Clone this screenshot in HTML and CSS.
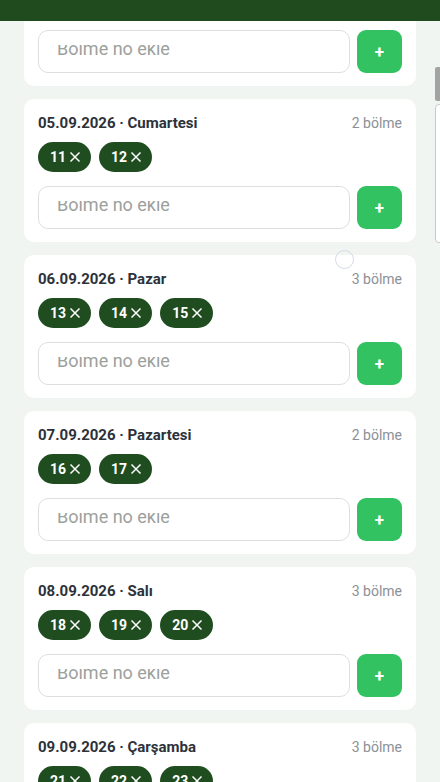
FILE: index.html
```html
<!DOCTYPE html>
<html lang="tr">
<head>
  <meta charset="UTF-8" />
  <title>Bölümler</title>
  <meta name="viewport" content="width=device-width, initial-scale=1.0" />
  <link rel="stylesheet" href="styles.css">
</head>
<body>

  <!-- Üst bar -->
  <div class="topbar"></div>

  <!-- Gün listesi -->
  <div class="list">

    <div class="day-card">
      <div class="day-head">
        <span class="day-title">04.09.2026 · Cuma</span>
        <span class="day-count">2 bölme</span>
      </div>
      <div class="chips">
        <span class="chip">9 <svg viewBox="0 0 12 12"><path d="M1.5 1.5l9 9M10.5 1.5l-9 9"/></svg></span>
        <span class="chip">10 <svg viewBox="0 0 12 12"><path d="M1.5 1.5l9 9M10.5 1.5l-9 9"/></svg></span>
      </div>
      <div class="add-row">
        <div class="field"><div class="clip"><input type="text" placeholder="Bölme no ekle"></div></div>
        <button class="add-btn">+</button>
      </div>
    </div>

    <div class="day-card">
      <div class="day-head">
        <span class="day-title">05.09.2026 · Cumartesi</span>
        <span class="day-count">2 bölme</span>
      </div>
      <div class="chips">
        <span class="chip">11 <svg viewBox="0 0 12 12"><path d="M1.5 1.5l9 9M10.5 1.5l-9 9"/></svg></span>
        <span class="chip">12 <svg viewBox="0 0 12 12"><path d="M1.5 1.5l9 9M10.5 1.5l-9 9"/></svg></span>
      </div>
      <div class="add-row">
        <div class="field"><div class="clip"><input type="text" placeholder="Bölme no ekle"></div></div>
        <button class="add-btn">+</button>
      </div>
    </div>

    <div class="day-card">
      <div class="day-head">
        <span class="day-title">06.09.2026 · Pazar</span>
        <span class="day-count">3 bölme</span>
      </div>
      <div class="chips">
        <span class="chip">13 <svg viewBox="0 0 12 12"><path d="M1.5 1.5l9 9M10.5 1.5l-9 9"/></svg></span>
        <span class="chip">14 <svg viewBox="0 0 12 12"><path d="M1.5 1.5l9 9M10.5 1.5l-9 9"/></svg></span>
        <span class="chip">15 <svg viewBox="0 0 12 12"><path d="M1.5 1.5l9 9M10.5 1.5l-9 9"/></svg></span>
      </div>
      <div class="add-row">
        <div class="field"><div class="clip"><input type="text" placeholder="Bölme no ekle"></div></div>
        <button class="add-btn">+</button>
      </div>
    </div>

    <div class="day-card">
      <div class="day-head">
        <span class="day-title">07.09.2026 · Pazartesi</span>
        <span class="day-count">2 bölme</span>
      </div>
      <div class="chips">
        <span class="chip">16 <svg viewBox="0 0 12 12"><path d="M1.5 1.5l9 9M10.5 1.5l-9 9"/></svg></span>
        <span class="chip">17 <svg viewBox="0 0 12 12"><path d="M1.5 1.5l9 9M10.5 1.5l-9 9"/></svg></span>
      </div>
      <div class="add-row">
        <div class="field"><div class="clip"><input type="text" placeholder="Bölme no ekle"></div></div>
        <button class="add-btn">+</button>
      </div>
    </div>

    <div class="day-card">
      <div class="day-head">
        <span class="day-title">08.09.2026 · Salı</span>
        <span class="day-count">3 bölme</span>
      </div>
      <div class="chips">
        <span class="chip">18 <svg viewBox="0 0 12 12"><path d="M1.5 1.5l9 9M10.5 1.5l-9 9"/></svg></span>
        <span class="chip">19 <svg viewBox="0 0 12 12"><path d="M1.5 1.5l9 9M10.5 1.5l-9 9"/></svg></span>
        <span class="chip">20 <svg viewBox="0 0 12 12"><path d="M1.5 1.5l9 9M10.5 1.5l-9 9"/></svg></span>
      </div>
      <div class="add-row">
        <div class="field"><div class="clip"><input type="text" placeholder="Bölme no ekle"></div></div>
        <button class="add-btn">+</button>
      </div>
    </div>

    <div class="day-card">
      <div class="day-head">
        <span class="day-title">09.09.2026 · Çarşamba</span>
        <span class="day-count">3 bölme</span>
      </div>
      <div class="chips">
        <span class="chip">21 <svg viewBox="0 0 12 12"><path d="M1.5 1.5l9 9M10.5 1.5l-9 9"/></svg></span>
        <span class="chip">22 <svg viewBox="0 0 12 12"><path d="M1.5 1.5l9 9M10.5 1.5l-9 9"/></svg></span>
        <span class="chip">23 <svg viewBox="0 0 12 12"><path d="M1.5 1.5l9 9M10.5 1.5l-9 9"/></svg></span>
      </div>
      <div class="add-row">
        <div class="field"><div class="clip"><input type="text" placeholder="Bölme no ekle"></div></div>
        <button class="add-btn">+</button>
      </div>
    </div>

  </div>

  <!-- Kaydırma göstergeleri -->
  <div class="scroll-thumb"></div>
  <div class="fast-scroll"></div>
  <div class="touch-dot"></div>

</body>
</html>
```

FILE: styles.css
```css
body {
  margin: 0;
  padding: 0;
  font-family: Roboto, 'Noto Sans', sans-serif;
  background: #f1f5f1;
  color: #2d323a;
  overflow: hidden;
}

/* Üst bar */
.topbar {
  position: fixed;
  top: 0;
  left: 0;
  right: 0;
  height: 21px;
  background: #1f4b1f;
  z-index: 10;
}

/* Liste (kaydırılmış konum) */
.list {
  margin-top: -57px;
  padding: 0 24px;
  display: flex;
  flex-direction: column;
  gap: 13px;
}

.day-card {
  background: #fff;
  border-radius: 10px;
  padding: 14px 14px 13px;
}

.day-head {
  display: flex;
  justify-content: space-between;
  align-items: center;
  height: 20px;
}

.day-title {
  font-size: 15px;
  font-weight: 700;
  color: #2d323a;
}

.day-count {
  font-size: 14px;
  color: #8b9096;
}

.chips {
  display: flex;
  gap: 8px;
  margin-top: 9px;
}

.chip {
  display: inline-flex;
  align-items: center;
  gap: 3px;
  height: 30px;
  padding: 0 10px 0 12px;
  border-radius: 15px;
  background: #1f4d1f;
  color: #fff;
  font-size: 14px;
  font-weight: 700;
  box-sizing: border-box;
}

.chip svg {
  width: 12px;
  height: 12px;
  fill: none;
  stroke: #fff;
  stroke-width: 1.5;
}

.add-row {
  display: flex;
  gap: 7px;
  margin-top: 14px;
}

.field {
  flex: 1;
  height: 43px;
  box-sizing: border-box;
  border: 1px solid #dcdfdc;
  border-radius: 10px;
  background: #fff;
}

.field .clip {
  margin-top: 14px;
  height: 27px;
  overflow: hidden;
}

.field input {
  display: block;
  width: 100%;
  height: 30px;
  margin-top: -12px;
  box-sizing: border-box;
  padding: 0 18px;
  border: none;
  outline: none;
  background: transparent;
  font-family: Roboto, sans-serif;
  font-size: 18px;
  color: #2d323a;
}

.field input::placeholder {
  color: #9ca19c;
}

.add-btn {
  width: 45px;
  height: 43px;
  border: none;
  border-radius: 9px;
  background: #33c261;
  color: #fff;
  font-family: Roboto, sans-serif;
  font-size: 17px;
  font-weight: 700;
  padding: 0;
  cursor: pointer;
}

/* Kaydırma göstergeleri */
.scroll-thumb {
  position: fixed;
  top: 67px;
  right: 0;
  width: 5px;
  height: 34px;
  background: #a3a3a3;
  border-radius: 2px 0 0 2px;
}

.fast-scroll {
  position: fixed;
  top: 104px;
  right: -6px;
  width: 9px;
  height: 137px;
  background: #fff;
  border: 1px solid #c9c9c9;
  border-radius: 4px;
}

.touch-dot {
  position: fixed;
  top: 250px;
  left: 335px;
  width: 17px;
  height: 17px;
  border: 1.5px solid #d3dae6;
  border-radius: 50%;
}
```
